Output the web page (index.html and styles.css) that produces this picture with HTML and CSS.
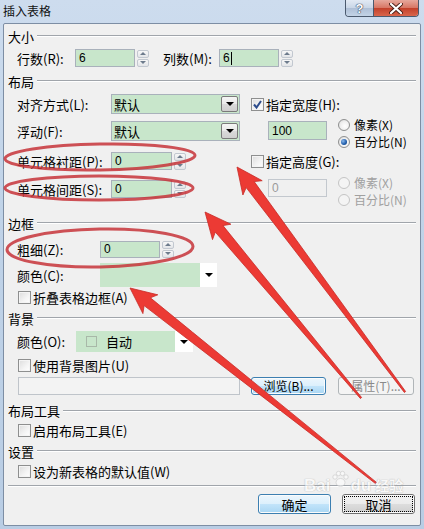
FILE: index.html
```html
<!DOCTYPE html>
<html lang="zh-CN">
<head>
    <meta charset="UTF-8">
    <title>插入表格</title>
    <link rel="stylesheet" href="styles.css">
</head>
<body>
    <div class="window">
        <div class="titlebar">
            <span class="title">插入表格</span>
            <div class="caption-btns">
                <span class="cap-btn help">?</span>
                <span class="cap-btn close">
                    <svg width="14" height="11" viewBox="0 0 14 11">
                        <path d="M2 1 L12 10 M12 1 L2 10" stroke="#4a2018" stroke-width="4" stroke-linecap="round"/>
                        <path d="M2 1 L12 10 M12 1 L2 10" stroke="#fff" stroke-width="2.2" stroke-linecap="round"/>
                    </svg>
                </span>
            </div>
        </div>

        <div class="client">
            <!-- 大小 -->
            <div class="group-title g-size"><span>大小</span></div>
            <div class="row r-size">
                <span class="lbl lbl-rows">行数(R):</span>
                <div class="field w-60">6</div>
                <div class="spinner"><span class="up"></span><span class="down"></span></div>
                <span class="lbl lbl-cols">列数(M):</span>
                <div class="field w-60">6<span class="caret"></span></div>
                <div class="spinner"><span class="up"></span><span class="down"></span></div>
            </div>

            <!-- 布局 -->
            <div class="group-title g-layout"><span>布局</span></div>
            <div class="layout">
                <div class="layout-left">
                    <div class="row r-align">
                        <span class="lbl lbl-wide">对齐方式(L):</span>
                        <div class="combo"><span class="combo-text">默认</span><span class="drop-btn"></span></div>
                    </div>
                    <div class="row r-float">
                        <span class="lbl lbl-wide">浮动(F):</span>
                        <div class="combo"><span class="combo-text">默认</span><span class="drop-btn"></span></div>
                    </div>
                    <div class="row r-padding">
                        <span class="lbl lbl-wide">单元格衬距(P):</span>
                        <div class="field w-61">0</div>
                        <div class="spinner"><span class="up"></span><span class="down"></span></div>
                    </div>
                    <div class="row r-spacing">
                        <span class="lbl lbl-wide">单元格间距(S):</span>
                        <div class="field w-61">0</div>
                        <div class="spinner"><span class="up"></span><span class="down"></span></div>
                    </div>
                </div>
                <div class="layout-right">
                    <div class="chk-row r-chk-w">
                        <span class="checkbox checked">
                            <svg width="11" height="11" viewBox="0 0 11 11"><path d="M2 5.5 L4.5 8.5 L9 2" fill="none" stroke="#2d4c8c" stroke-width="2"/></svg>
                        </span>
                        <span>指定宽度(H):</span>
                    </div>
                    <div class="sub sub-w">
                        <div class="field w-59 f-size">100</div>
                        <div class="radios">
                            <div class="radio-row"><span class="radio"></span>像素(X)</div>
                            <div class="radio-row"><span class="radio checked"></span>百分比(N)</div>
                        </div>
                    </div>
                    <div class="chk-row r-chk-h">
                        <span class="checkbox"></span>
                        <span>指定高度(G):</span>
                    </div>
                    <div class="sub sub-h">
                        <div class="field w-59 f-size disabled">0</div>
                        <div class="radios disabled">
                            <div class="radio-row"><span class="radio"></span>像素(X)</div>
                            <div class="radio-row"><span class="radio"></span>百分比(N)</div>
                        </div>
                    </div>
                </div>
            </div>

            <!-- 边框 -->
            <div class="group-title g-border"><span>边框</span></div>
            <div class="row r-weight">
                <span class="lbl lbl-border">粗细(Z):</span>
                <div class="field w-60">0</div>
                <div class="spinner"><span class="up"></span><span class="down"></span></div>
            </div>
            <div class="row r-bcolor">
                <span class="lbl lbl-border">颜色(C):</span>
                <div class="color-combo"><span class="color-fill"></span><span class="color-arrow"></span></div>
            </div>
            <div class="chk-row r-collapse">
                <span class="checkbox"></span>
                <span>折叠表格边框(A)</span>
            </div>

            <!-- 背景 -->
            <div class="group-title g-bg"><span>背景</span></div>
            <div class="row r-bgcolor">
                <span class="lbl lbl-bg">颜色(O):</span>
                <div class="color-combo bg-combo">
                    <span class="color-fill"><span class="swatch"></span>自动</span>
                    <span class="color-arrow"></span>
                </div>
            </div>
            <div class="chk-row r-useimg">
                <span class="checkbox"></span>
                <span>使用背景图片(U)</span>
            </div>
            <div class="row r-path">
                <div class="path-field"></div>
                <div class="btn default btn-browse">浏览(B)...</div>
                <div class="btn disabled btn-props">属性(T)...</div>
            </div>

            <!-- 布局工具 -->
            <div class="group-title g-tools"><span>布局工具</span></div>
            <div class="chk-row r-tools">
                <span class="checkbox"></span>
                <span>启用布局工具(E)</span>
            </div>

            <!-- 设置 -->
            <div class="group-title g-settings"><span>设置</span></div>
            <div class="chk-row r-default">
                <span class="checkbox"></span>
                <span>设为新表格的默认值(W)</span>
            </div>

            <div class="separator"></div>
            <div class="row r-buttons">
                <div class="btn default btn-ok">确定</div>
                <div class="btn btn-cancel"><span class="focus">取消</span></div>
            </div>
        </div>

        <!-- annotations drawn on top of the screenshot -->
        <svg class="marks" width="424" height="529" viewBox="0 0 424 529">
            <g fill="none" stroke="#c7353a" stroke-width="3" opacity="0.85">
                <ellipse cx="100" cy="157" rx="95" ry="13" transform="rotate(-1 100 157)"/>
                <ellipse cx="99" cy="188" rx="94" ry="12"/>
                <ellipse cx="100" cy="248" rx="93" ry="19" transform="rotate(-1 100 248)"/>
            </g>
            <g fill="#ec3a34" stroke="#c62b27" stroke-width="0.8">
                <polygon points="237,167 242.9,195 246.2,187.6 404.4,392.5 405.6,391.5 254.2,181.6 262.2,180.7"/>
                <polygon points="205,212 212.5,239.6 215.3,232.1 360.4,398.5 361.6,397.5 223,225.6 230.9,224.2"/>
                <polygon points="130,288 142.9,313.6 144.1,305.6 375.5,483.6 376.5,482.4 150.4,297.8 157.8,294.8"/>
            </g>
        </svg>
        <div class="watermark">
            <span class="wm-bai">Bai</span>
            <svg class="wm-paw" width="18" height="18" viewBox="0 0 18 18">
                <g fill="#fff" stroke="#b9b9b9" stroke-width="0.8">
                    <circle cx="4" cy="7" r="2.2"/><circle cx="7.5" cy="3.5" r="2.2"/>
                    <circle cx="11.5" cy="3.5" r="2.2"/><circle cx="15" cy="7" r="2.2"/>
                    <ellipse cx="9.5" cy="12.5" rx="4.5" ry="4"/>
                </g>
            </svg>
            <span class="wm-du">du</span>
            <span class="wm-jy">经验</span>
        </div>
    </div>
</body>
</html>
```

FILE: styles.css
```css
* {
    margin: 0;
    padding: 0;
    box-sizing: border-box;
}

body {
    width: 424px;
    height: 529px;
    overflow: hidden;
    font-family: "Noto Sans CJK SC", "Liberation Sans", sans-serif;
    font-size: 13px;
    color: #000;
    line-height: 1;
}

.window {
    position: relative;
    width: 424px;
    height: 529px;
    display: flex;
    flex-direction: column;
    background: linear-gradient(180deg, #cddcee 0%, #c0d3e8 40%, #b9cde4 100%);
}

/* title bar */
.titlebar {
    height: 23px;
    display: flex;
    justify-content: space-between;
    align-items: flex-start;
}

.title {
    padding: 3px 0 0 3px;
    font-size: 12px;
    line-height: 15px;
    color: #111;
}

.caption-btns {
    display: flex;
    margin-right: 5px;
    border: 1px solid #4b5a6e;
    border-top: none;
    border-radius: 0 0 4px 4px;
    overflow: hidden;
}

.cap-btn {
    height: 16px;
    display: flex;
    align-items: center;
    justify-content: center;
}

.help {
    width: 28px;
    border-right: 1px solid #4b5a6e;
    background: linear-gradient(180deg, #e2eaf4 0%, #c9d6e6 50%, #aebfd6 51%, #c3d3e6 100%);
    font-family: "Liberation Sans", sans-serif;
    font-weight: bold;
    font-size: 13px;
    color: #fff;
    text-shadow: 0 0 1px #34425a, 0 0 1px #34425a, 0 0 1px #34425a;
}

.close {
    width: 44px;
    background: linear-gradient(180deg, #e6a89c 0%, #d77563 50%, #c2402a 51%, #d9664c 100%);
}

/* dialog body */
.client {
    flex: 1;
    margin: 0 3px 3px 3px;
    border: 1px solid #7d8ea4;
    border-radius: 2px;
    background: #f0f0f0;
    display: flex;
    flex-direction: column;
}

.group-title {
    display: flex;
    align-items: center;
    padding: 0 4px 0 4px;
}

.group-title::after {
    content: "";
    flex: 1;
    margin-left: 3px;
    border-top: 1px solid #a0a5ab;
    border-bottom: 1px solid #fff;
}

.g-size { height: 24px; }
.g-layout { height: 26px; }
.g-border { height: 26px; }
.g-bg { height: 22px; }
.g-tools { height: 21px; margin-top: 5px; }
.g-settings { height: 24px; }

.row {
    display: flex;
    align-items: center;
    padding-left: 13px;
}

.lbl {
    flex-shrink: 0;
    white-space: nowrap;
}

.lbl-rows { width: 58px; }
.lbl-cols { width: 56px; margin-left: 14px; }
.lbl-wide { width: 94px; }
.lbl-border { width: 83px; }
.lbl-bg { width: 59px; }

.field {
    height: 18px;
    display: flex;
    align-items: center;
    padding-left: 3px;
    background: #c8e6cb;
    border: 1px solid #a9b1bb;
    font-family: "Liberation Sans", sans-serif;
    font-size: 12px;
}

.field.disabled {
    background: #f0f0f0;
    border-color: #c3c8ce;
    color: #9a9a9a;
}

.w-60 { width: 60px; }
.w-61 { width: 61px; }
.w-59 { width: 59px; }

.caret {
    width: 1px;
    height: 13px;
    margin-left: 1px;
    background: #000;
}

.spinner {
    width: 12px;
    height: 17px;
    margin-left: 2px;
    display: flex;
    flex-direction: column;
    gap: 1px;
}

.spinner span {
    flex: 1;
    border: 1px solid #c2c8d0;
    border-radius: 2px;
    background: linear-gradient(180deg, #f7f7f7 0%, #e3e5e8 100%);
    display: flex;
    align-items: center;
    justify-content: center;
}

.spinner .up::after {
    content: "";
    border-left: 3px solid transparent;
    border-right: 3px solid transparent;
    border-bottom: 3px solid #6d7b8c;
}

.spinner .down::after {
    content: "";
    border-left: 3px solid transparent;
    border-right: 3px solid transparent;
    border-top: 3px solid #6d7b8c;
}

/* size row */
.r-size { height: 20px; }
.r-size .field { height: 18px; }

/* layout section */
.layout {
    height: 116px;
    display: flex;
}

.layout-left {
    width: 244px;
}

.r-align { height: 20px; }
.r-float { height: 20px; margin-top: 7px; }
.r-padding { height: 18px; margin-top: 11px; }
.r-spacing { height: 18px; margin-top: 10px; }

.r-padding .field,
.r-spacing .field { height: 18px; }

.combo {
    width: 129px;
    height: 20px;
    display: flex;
    border: 1px solid #a9b1bb;
    background: #c8e6cb;
}

.combo-text {
    flex: 1;
    padding-left: 2px;
    display: flex;
    align-items: center;
}

.drop-btn {
    width: 17px;
    margin: 1px;
    border: 1px solid #7a7a7a;
    border-radius: 2px;
    background: linear-gradient(180deg, #f5f5f5 0%, #e9e9e9 50%, #dadada 51%, #cfcfcf 100%);
    display: flex;
    align-items: center;
    justify-content: center;
}

.drop-btn::after,
.color-arrow::after {
    content: "";
    border-left: 4px solid transparent;
    border-right: 4px solid transparent;
    border-top: 4px solid #000;
}

.layout-right {
    flex: 1;
    padding-left: 3px;
}

.chk-row {
    display: flex;
    align-items: center;
    gap: 2px;
    padding-left: 14px;
}

.layout-right .chk-row { padding-left: 0; }

.r-chk-w { height: 20px; }
.r-chk-h { height: 18px; margin-top: 2px; }

.checkbox {
    width: 13px;
    height: 13px;
    flex-shrink: 0;
    border: 1px solid #8e8f8f;
    background: linear-gradient(135deg, #dcdcdc 0%, #f4f4f4 60%, #fff 100%);
    box-shadow: inset 0 0 0 1px #f4f4f4;
    display: flex;
    align-items: center;
    justify-content: center;
}

.sub {
    height: 34px;
    display: flex;
}

.sub-w { margin-top: 2px; }
.sub-h { margin-top: 4px; }

.f-size {
    margin-left: 17px;
    margin-top: 5px;
}

.sub-w .f-size { height: 19px; }

.radios {
    margin-left: 11px;
    font-size: 12px;
}

.radios.disabled { color: #a0a0a0; }

.radio-row {
    height: 17px;
    display: flex;
    align-items: center;
    gap: 4px;
    line-height: 12px;
}

.radio {
    width: 12px;
    height: 12px;
    border-radius: 50%;
    border: 1px solid #8e8f8f;
    background: radial-gradient(circle at 60% 60%, #fff 0%, #f0f0f0 50%, #d6d6d6 100%);
    display: flex;
    align-items: center;
    justify-content: center;
}

.radio.checked::after {
    content: "";
    width: 6px;
    height: 6px;
    border-radius: 50%;
    background: radial-gradient(circle at 35% 35%, #8ab8ec 0%, #1d5aa8 60%, #123f7a 100%);
}

.radios.disabled .radio {
    border-color: #c4c4c4;
    background: #f4f4f4;
}

/* border section */
.r-weight { height: 18px; margin-top: 4px; }
.r-weight .field { height: 17px; }
.r-bcolor { height: 24px; margin-top: 5px; }

.color-combo {
    width: 117px;
    height: 24px;
    display: flex;
    background: #fff;
}

.color-fill {
    width: 100px;
    background: #c8e6cb;
    display: flex;
    align-items: center;
}

.color-arrow {
    flex: 1;
    display: flex;
    align-items: center;
    justify-content: center;
}

.r-collapse { height: 20px; }

/* background section */
.r-bgcolor { height: 21px; margin-top: 2px; }

.bg-combo { height: 21px; }

.bg-combo .color-fill {
    width: 99px;
    padding-left: 10px;
    gap: 9px;
}

.swatch {
    width: 11px;
    height: 11px;
    border: 1px solid #a8b8a8;
}

.r-useimg { height: 20px; margin-top: 3px; }

.r-path {
    height: 18px;
    margin-top: 2px;
    padding-left: 14px;
}

.path-field {
    width: 222px;
    height: 18px;
    border: 1px solid #bfc4ca;
    background: #f3f3f3;
}

.btn {
    height: 18px;
    display: flex;
    align-items: center;
    justify-content: center;
    border: 1px solid #707070;
    border-radius: 3px;
    background: linear-gradient(180deg, #f2f2f2 0%, #ebebeb 50%, #dddddd 51%, #cfcfcf 100%);
    box-shadow: inset 0 0 0 1px #fbfbfb;
    font-size: 12px;
}

.btn.default {
    border-color: #3c7fb1;
    background: linear-gradient(180deg, #ecf6fd 0%, #dcf0fc 50%, #c2e4fa 51%, #a9d6f3 100%);
}

.btn.disabled {
    border-color: #b0b5b8;
    background: #f4f4f4;
    box-shadow: none;
    color: #8a8a8a;
}

.btn-browse { width: 75px; margin-left: 11px; }
.btn-props { width: 76px; margin-left: 12px; }

.r-tools { height: 18px; }
.r-default { height: 16px; }

.separator {
    margin: 6px 4px 0 4px;
    border-top: 1px solid #a0a5ab;
    border-bottom: 1px solid #fff;
}

.r-buttons {
    height: 20px;
    margin-top: 7px;
    justify-content: flex-end;
    gap: 11px;
    padding-right: 5px;
}

.r-buttons .btn {
    width: 73px;
    height: 20px;
    font-size: 13px;
}

.btn-cancel .focus {
    width: 67px;
    height: 14px;
    display: flex;
    align-items: center;
    justify-content: center;
    outline: 1px dotted #000;
}

/* annotation overlay */
.marks {
    position: absolute;
    top: 0;
    left: 0;
    pointer-events: none;
}

.watermark {
    position: absolute;
    left: 304px;
    top: 470px;
    display: flex;
    align-items: flex-end;
    opacity: 0.55;
    pointer-events: none;
    line-height: 17px;
}

.watermark span {
    font-family: "Liberation Sans", sans-serif;
    font-weight: bold;
    font-size: 17px;
    color: #fff;
    text-shadow: 0 0 1px #999, 0 0 1px #999;
}

.wm-paw { margin: 0 1px 6px 1px; }

.watermark .wm-jy {
    font-family: "Noto Sans CJK SC", sans-serif;
    font-size: 14px;
    line-height: 14px;
    margin-left: 4px;
    margin-bottom: 2px;
}
```
